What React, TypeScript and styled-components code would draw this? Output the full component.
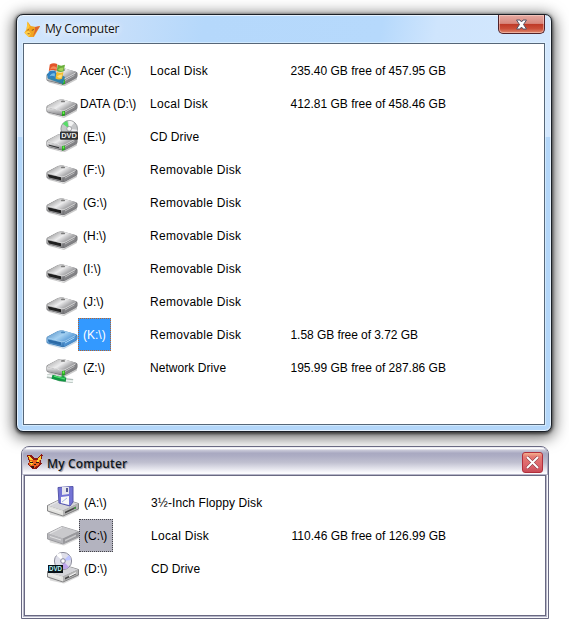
import React, { useId } from "react";
import styled, { createGlobalStyle } from "styled-components";

const GlobalStyle = createGlobalStyle`
  * { box-sizing: border-box; }
  body { margin: 0; background: #fff; overflow: hidden; }
`;

const Desktop = styled.main`
  width: 569px;
  height: 627px;
  padding: 14px 0 0 16px;
  background: #fff;
`;

const AeroWindow = styled.section`
  width: 536px;
  height: 418px;
  border: 1px solid #1b2027;
  border-radius: 7px;
  padding: 0 6px 6px;
  background:
    linear-gradient(100deg, #d3e7fd 0, #c7dffa 18%, #b5d8fb 34%, #b6d9fc 66%, #cfe5fd 76%, #d4e8fe 100%) top / 100% 122px no-repeat,
    #b4d7fa;
  box-shadow:
    inset 0 0 0 1px rgba(255, 255, 255, 0.65),
    0 1px 3px 1px rgba(0, 0, 0, 0.55),
    0 3px 15px 2px rgba(0, 0, 0, 0.65);
`;

const AeroTitleBar = styled.header`
  height: 28px;
  padding-left: 1px;
  display: flex;
  align-items: flex-start;
`;

const AeroTitle = styled.h1`
  flex: 1;
  margin: 6px 0 0 5px;
  font: 400 12px/16px "Open Sans", sans-serif;
  letter-spacing: -0.2px;
  color: #111;
  text-shadow: 0 0 7px #fff, 0 0 9px #fff;
`;

const FoxSlot = styled.span`
  display: block;
  width: 16px;
  height: 16px;
  margin-top: 6px;
  svg { display: block; }
`;

const AeroClose = styled.button`
  width: 47px;
  height: 19px;
  padding: 0;
  border: 1px solid #50222a;
  border-top: 0;
  border-radius: 0 0 5px 5px;
  background: linear-gradient(#e6aaa2 0, #d8877c 47%, #bd3826 50%, #cb4e38 76%, #df8a70 100%);
  box-shadow: inset 0 0 0 1px rgba(255, 220, 210, 0.5);
  svg { display: block; margin: 0 auto; }
`;

const AeroContent = styled.div`
  height: 382px;
  border: 1px solid #566678;
  background: #fff;
  padding: 10px 0 0 22px;
  box-shadow: 0 0 0 1px rgba(225, 242, 255, 0.65);
`;

const XpWindow = styled.section`
  width: 528px;
  height: 173px;
  margin: 14px 0 0 5px;
  padding: 0 2px 2px;
  border: 1px solid #696982;
  border-radius: 8px 8px 0 0;
  background: #f7f7fb;
`;

const XpTitleBar = styled.header`
  height: 28px;
  margin: 0 -2px;
  padding: 0 5px;
  display: flex;
  align-items: flex-start;
  border-radius: 7px 7px 0 0;
  box-shadow: inset 1px 0 #c5c5d6, inset -1px 0 #aaaac0;
  background: linear-gradient(#e3e3ee 0, #fff 5%, #c7c7d7 12%, #a9a9c1 22%, #adadc4 32%, #c0c0d0 55%, #dedee8 74%, #fafafd 91%, #fff 100%);
  ${FoxSlot} { margin-top: 7px; }
`;

const XpTitle = styled.h2`
  flex: 1;
  margin: 8px 0 0 4px;
  font: 600 12px/18px "Open Sans", sans-serif;
  letter-spacing: 0.12px;
  color: #111820;
  text-shadow: 1px 1px 1px #8b8b9b;
`;

const XpClose = styled.button`
  width: 21px;
  height: 21px;
  margin-top: 5px;
  padding: 0;
  border: 1px solid #b12f3c;
  border-radius: 3px;
  background: linear-gradient(#f5b08d 0, #e57972 20%, #dc646b 65%, #c94c58 100%);
  svg { display: block; margin: 0 auto; }
`;

const XpContent = styled.div`
  height: 141px;
  border: 1px solid #696982;
  box-shadow: 0 0 0 1px #b7b7c9;
  background: #fff;
  padding: 10px 0 0 22px;
`;

const Row = styled.div`
  height: 33px;
  display: grid;
  grid-template-columns: 32px 72px 140.5px 1fr;
  font: 400 12px/35px "Liberation Sans", Arial, sans-serif;
  color: #000;
  white-space: pre;
`;

const LabelCell = styled.div<{ $named?: boolean; $selected?: "blue" | "gray" }>`
  justify-self: start;
  width: ${(p) => (p.$selected === "gray" ? 34 : p.$selected ? 33 : 72)}px;
  height: 33px;
  line-height: 33px;
  padding-left: ${(p) => (p.$named ? 1 : 4)}px;
  border: 1px dotted ${(p) => (p.$selected === "blue" ? "#b8642c" : p.$selected ? "#444449" : "transparent")};
  background: ${(p) => (p.$selected === "blue" ? "#3399ff" : p.$selected ? "#b3b3bf" : "transparent")};
  color: ${(p) => (p.$selected === "blue" ? "#fff" : "#000")};
`;

const KindCell = styled.div<{ $spacing: number }>`
  letter-spacing: ${(p) => p.$spacing}px;
`;

const SpaceCell = styled.div<{ $tight?: boolean }>`
  letter-spacing: ${(p) => (p.$tight ? -0.06 : 0)}px;
`;

const IconSvg = styled.svg`
  display: block;
  width: 32px;
  height: 32px;
`;

type Kind = "system" | "local" | "dvd" | "removable" | "removableSelected" | "network" | "floppy" | "xpdisk" | "xpdvd";

function Disc({ x, y }: { x: number; y: number }) {
  return (
    <g transform={`translate(${x} ${y})`}>
      <circle r="8.3" fill="#c5c7c9" stroke="#85888c" strokeWidth=".8" />
      <path d="M0 0L-6.5-5A8 8 0 0 1-2-7.8Z" fill="#58dc69" />
      <path d="M0 0L-1-8A8 8 0 0 1 5-6Z" fill="#f2f3f3" />
      <path d="M0 0L8 1A8 8 0 0 1 5 6Z" fill="#efeff2" />
      <circle r="2.4" fill="#f5f5f5" stroke="#96969c" strokeWidth=".8" />
    </g>
  );
}

function DriveIcon({ kind }: { kind: Kind }) {
  const id = useId().replace(/[^a-zA-Z0-9]/g, "");
  const blue = kind === "removableSelected";
  const removable = kind === "removable" || blue;
  const xp = kind === "floppy" || kind === "xpdisk" || kind === "xpdvd";

  if (xp) {
    const disk = kind === "xpdisk";
    return (
      <IconSvg viewBox="0 0 32 32">
        <g transform={disk ? "translate(0 -4.5)" : "translate(0 .5)"}>
          <path d="M2 24L17 29L32 21V24L17 31L3 28Z" fill="#bbb" opacity=".55" />
          <path d="M.5 19L15 12L31.5 17V22.5L16 29.5L.5 24.5Z" fill={disk ? "#a8a8ac" : "#8d8d8e"} stroke={disk ? "#929296" : "#777779"} strokeWidth=".8" />
          <path d="M1 19L15 12L31 17L16 24Z" fill={disk ? "#c9c9cc" : "#d4d4d8"} />
          <path d="M16 24L31 17V22L16 29Z" fill={disk ? "#98989c" : "#b4b4b4"} />
          <path d="M1 19L16 24V29L1 24Z" fill={disk ? "#b6b6ba" : "#e2e2df"} />
          <path d="M18 25.2L29 20V21.7L18 27Z" fill={disk ? "#c7c7c9" : "#464646"} />
          <path d="M3 19L15 13M3 22L14 25.5" stroke="#f3f3f3" strokeWidth=".7" />
        </g>
        {kind === "floppy" && (
          <g>
            <path d="M11 1.5L26 .5V16L23 20L12 17Z" fill="#7373d5" stroke="#5555aa" strokeWidth="1" />
            <path d="M15 1H22V8L15 9Z" fill="#e5e5ed" />
            <path d="M19 2H21V6H19Z" fill="#555b91" />
            <path d="M14 11L22 10V19L14 17Z" fill="#f8f8f8" />
            <path d="M15 16L20 12" stroke="#a6b5e2" />
            <circle cx="28" cy="22" r="1" fill="#40a340" />
          </g>
        )}
        {kind === "xpdvd" && (
          <g>
            <circle cx="16" cy="9" r="8.6" fill="#dedee9" stroke="#8d8d9b" />
            <path d="M16 9L9 3Q11 1 14 1Z" fill="#fff" />
            <path d="M16 9L22 3Q24 5 24 8Z" fill="#bdc3ff" />
            <path d="M16 9L22 15Q18 18 15 17Z" fill="#bea6eb" />
            <circle cx="16" cy="9" r="2.3" fill="#fff" stroke="#85859c" />
            <rect x="1" y="13" width="15" height="8" fill="#071116" />
            <text x="2" y="19.4" fill="#bdfafa" fontFamily="Liberation Sans, Arial" fontSize="6.8" fontWeight="700" textLength="13" lengthAdjust="spacingAndGlyphs">DVD</text>
            <path d="M22 23.5L29 20V21.5L22 25Z" fill="#f4f4f4" />
          </g>
        )}
      </IconSvg>
    );
  }

  const shift = kind === "system" || kind === "dvd" ? 1.5 : kind === "network" ? -4.5 : 0;
  return (
    <IconSvg viewBox="0 0 32 32">
      <defs>
        <linearGradient id={`${id}t`} x1="0" y1="0" x2="1" y2=".6">
          <stop stopColor={blue ? "#4a86be" : removable ? "#777" : "#999"} />
          <stop offset=".55" stopColor={blue ? "#a5d1f2" : "#ededee"} />
          <stop offset="1" stopColor={blue ? "#4a90d1" : "#808083"} />
        </linearGradient>
        <linearGradient id={`${id}f`} x1="0" y1="0" x2="0" y2="1">
          <stop stopColor={blue ? "#8fc4ef" : removable ? "#bbb" : "#ededee"} />
          <stop offset="1" stopColor={blue ? "#3c7dbc" : "#808083"} />
        </linearGradient>
      </defs>
      <g transform={`translate(0 ${shift})`}>
        <path d="M1 25L17 30L31 22V24L18 31L3 27Z" fill={blue ? "#6d9dc7" : "#777"} opacity=".4" />
        <path d="M.5 20Q.5 19 2 18.3L12 13Q14 12 17 12.6L30 16.3Q31.5 17 31.5 18V20.5Q31.5 22 30 22.8L19 28.8Q17.5 29.5 15.5 29L2 25.5Q.5 25 .5 24Z" fill={blue ? "#3877b0" : "#707073"} />
        <path d="M2 18.5L12 13Q14 12 17 12.6L29.5 16Q31 16.7 29.5 17.7L19 23Q17 24 15 23.5L2 20.2Q.6 19.3 2 18.5Z" fill={`url(#${id}t)`} />
        <path d="M1 20.5L16.5 24.2V28.5L2 25Q1 24.5 1 23.5Z" fill={`url(#${id}f)`} />
        <path d="M17 24L31 17.5V20.5Q31 22 30 22.5L18 28.8Z" fill={blue ? "#4c8fce" : "#818184"} />
        {removable && <path d="M1.5 21.2L15 24.3V27.3L3 24.5Z" fill={blue ? "#2c6ba7" : "#202020"} />}
        {kind === "dvd" && <path d="M2.5 23L13 25.7V26.7L3 24.2Z" fill="#303233" />}
        <path d="M19 25L28.5 19.8" stroke={blue ? "#a7d8fb" : "#bcbcbd"} strokeWidth="1" />
        {!removable && <path d="M16 24H19V28.2L16 29.2Z" fill="#23a51d" />}
        {!removable && <path d="M16.7 24.8H18.3V27H16.7Z" fill="#72ee56" />}
        <ellipse cx="17" cy="14.4" rx="2.2" ry=".9" fill={blue ? "#4a88bf" : "#7c7c7c"} />
        <path d="M1.3 20L15 23.7Q17 24.2 19 23.2L29.5 17.6" fill="none" stroke={blue ? "#b5ddfa" : "#ededed"} strokeWidth=".8" />
      </g>
      {kind === "system" && (
        <g>
          <path d="M.8 20Q8 16 19 23L17 30L2 24.7Z" fill="#247da8" opacity=".9" />
          <g transform="translate(1 -.4)">
            <path d="M2.8 11Q6.5 8.4 10.2 10.5L9.4 17.3Q6 15.4 1.8 17.4Z" fill="#e3552a" />
            <path d="M10.6 10.9Q13.5 13 18 11.2L16.6 18Q13 19.2 9.8 17.5Z" fill="#69ad3b" />
            <path d="M1.8 18Q5.6 16 9 18L8 24.8Q4.4 22.8.5 24.5Z" fill="#2e7fc4" />
            <path d="M9.6 18.2Q12.7 20.1 16.5 18.5L15 25.2Q11.6 26.5 8.5 24.9Z" fill="#f6bd30" />
            <path d="M3.5 15Q5.5 11 9 13.5L9 16Q6 14.5 3 16Z" fill="#f48d57" />
            <path d="M11 16Q13 14 16.5 14L16 17Q13 18 11 16Z" fill="#a3d25d" />
            <path d="M3 22Q5 19 8 20L7.7 23Q5 21.5 2.5 22.7Z" fill="#75bce6" />
            <path d="M10 23Q12 21 15 21L14.5 24Q12 25 10 23Z" fill="#ffe07b" />
          </g>
        </g>
      )}
      {kind === "dvd" && (
        <g>
          <Disc x={23.2} y={8.8} />
          <rect x="14" y="11.6" width="18" height="8.2" rx="1" fill="#303233" />
          <text x="15.2" y="18.1" fill="#eee" fontFamily="Liberation Sans, Arial" fontSize="6.7" fontWeight="700" textLength="15.5" lengthAdjust="spacingAndGlyphs">DVD</text>
        </g>
      )}
      {kind === "network" && (
        <g transform="translate(0 .5)">
          <path d="M1 24.6L8 25.5L14 28L27 29.5" fill="none" stroke="#aebbb6" strokeWidth="4" />
          <path d="M1 24L8 24.9M20 29L27 29.8" stroke="#edf4f1" strokeWidth="2" />
          <path d="M6 25.2L13 27.2L20 28.2" fill="none" stroke="#119642" strokeWidth="4.2" />
          <path d="M17 24V28" stroke="#23a54a" strokeWidth="3" />
          <path d="M8 24.7L19 27.5" stroke="#4de36c" strokeWidth="1.2" />
        </g>
      )}
    </IconSvg>
  );
}

function AeroFox() {
  return (
    <svg width="16" height="17" viewBox="0.6 0.6 15.2 15.2" preserveAspectRatio="none">
      <path d="M4 1L7 5L12 6L16 5L13 10L10 15L5 15L1 11L3 8Z" fill="#f2a51f" />
      <path d="M4 1L6 6L3 9Z" fill="#ffc936" />
      <path d="M11 6L16 5L13 9L9 15L11 9Z" fill="#dc6332" />
      <path d="M1 11L5 9L7 12L5 15Z" fill="#ffcf4a" />
      <path d="M4 9L5 8M8 9L10 8M4 12H6" stroke="#976129" strokeWidth="1" />
    </svg>
  );
}

function XpFox() {
  return (
    <svg width="16" height="17" viewBox="0 0 16 17" shapeRendering="crispEdges">
      <path d="M0 1H4L7 4H10L14 0L16 1L14 7L15 10L11 13L9 15L5 15L1 11L2 7Z" fill="#8b1712" />
      <path d="M1 2L6 6H10L14 2L13 8L12 11L9 12L7 14L4 13L2 10L3 7Z" fill="#ee641c" />
      <path d="M1 2H3L6 6H3ZM12 3L14 2V6L10 7ZM3 7L6 8L5 12L3 10ZM8 8L12 7L10 10Z" fill="#ffd12f" />
      <path d="M3 8H6V9H3ZM9 8H12V9H9ZM4 12H7V14H5ZM7 10H9V11H7Z" fill="#301512" />
    </svg>
  );
}

interface Drive {
  kind: Kind;
  label: string;
  description: string;
  capacity?: string;
  tight?: boolean;
  named?: boolean;
  selected?: "blue" | "gray";
  spacing: number;
}

const drives: Drive[] = [
  { kind: "system", label: "Acer (C:\\)", description: "Local Disk", capacity: "235.40 GB free of 457.95 GB", named: true, spacing: 0.28 },
  { kind: "local", label: "DATA (D:\\)", description: "Local Disk", capacity: "412.81 GB free of 458.46 GB", named: true, spacing: 0.28 },
  { kind: "dvd", label: "(E:\\)", description: "CD Drive", spacing: 0.06 },
  ...["F", "G", "H", "I", "J"].map((letter): Drive => ({ kind: "removable", label: `(${letter}:\\)`, description: "Removable Disk", spacing: 0.28 })),
  { kind: "removableSelected", label: "(K:\\)", description: "Removable Disk", capacity: "1.58 GB free of 3.72 GB", tight: true, selected: "blue", spacing: 0.28 },
  { kind: "network", label: "(Z:\\)", description: "Network Drive", capacity: "195.99 GB free of 287.86 GB", spacing: 0.06 },
];

const classicDrives: Drive[] = [
  { kind: "floppy", label: "(A:\\)", description: "3½-Inch Floppy Disk", spacing: 0.1 },
  { kind: "xpdisk", label: "(C:\\)", description: "Local Disk", capacity: "110.46 GB free of 126.99 GB", selected: "gray", spacing: 0.28 },
  { kind: "xpdvd", label: "(D:\\)", description: "CD Drive", spacing: 0.06 },
];

function DriveRow({ drive }: { drive: Drive }) {
  return (
    <Row>
      <DriveIcon kind={drive.kind} />
      <LabelCell $named={drive.named} $selected={drive.selected}>{drive.label}</LabelCell>
      <KindCell $spacing={drive.spacing}>{drive.description}</KindCell>
      <SpaceCell $tight={drive.tight}>{drive.capacity}</SpaceCell>
    </Row>
  );
}

export default function App() {
  return (
    <>
      <GlobalStyle />
      <Desktop>
        <AeroWindow>
          <AeroTitleBar>
            <FoxSlot><AeroFox /></FoxSlot>
            <AeroTitle>My Computer</AeroTitle>
            <AeroClose aria-label="Close">
              <svg width="13" height="11" viewBox="0 0 13 11">
                <path d="M1.5 1H5L6.5 3L8 1H11.5L8.5 5.5L11.5 10H8L6.5 8L5 10H1.5L4.5 5.5Z" fill="#fff" stroke="#555566" strokeWidth="1" />
              </svg>
            </AeroClose>
          </AeroTitleBar>
          <AeroContent>
            {drives.map((drive) => <DriveRow key={drive.label} drive={drive} />)}
          </AeroContent>
        </AeroWindow>
        <XpWindow>
          <XpTitleBar>
            <FoxSlot><XpFox /></FoxSlot>
            <XpTitle>My Computer</XpTitle>
            <XpClose aria-label="Close">
              <svg width="13" height="13" viewBox="0 0 13 13">
                <path d="M1 1L12 12M12 1L1 12" stroke="#793039" strokeWidth="3" />
                <path d="M1 1L12 12M12 1L1 12" stroke="#fff" strokeWidth="2" />
              </svg>
            </XpClose>
          </XpTitleBar>
          <XpContent>
            {classicDrives.map((drive) => <DriveRow key={drive.label} drive={drive} />)}
          </XpContent>
        </XpWindow>
      </Desktop>
    </>
  );
}
